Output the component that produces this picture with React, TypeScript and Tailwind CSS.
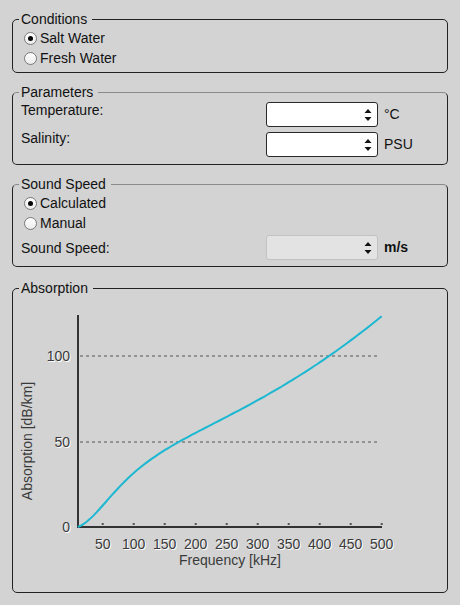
import React from "react";

// absorption model (dB/km) vs frequency (kHz): relaxation + viscous term
const absorption = (f: number) => {
  const f2 = 90;
  return (0.59 * f2 * f * f) / (f2 * f2 + f * f) + 2.9e-4 * f * f;
};

const fx = (f: number) => 71.7 + 0.62 * f;
const vy = (v: number) => 527 - 1.71 * v;

const curvePath = () => {
  const pts: string[] = [];
  for (let f = 10; f <= 500; f += 5) {
    pts.push(`${fx(f).toFixed(1)},${vy(absorption(f) - absorption(10)).toFixed(1)}`);
  }
  return "M" + pts.join(" L");
};

const Radio = ({ label, checked }: { label: string; checked?: boolean }) => (
  <label className="flex items-center h-[20px]">
    <span className="ml-[5px] mr-[3px] w-[13px] h-[13px] rounded-full border border-[#7a7a7a] bg-gradient-to-b from-white to-[#ececec] flex items-center justify-center">
      {checked && <span className="w-[5px] h-[5px] rounded-full bg-black" />}
    </span>
    <span>{label}</span>
  </label>
);

const Spinner = ({ disabled }: { disabled?: boolean }) => (
  <div
    className={
      "relative w-[112px] h-[25px] rounded-[3px] border " +
      (disabled ? "bg-[#e3e3e3] border-[#c2c2c2]" : "bg-white border-[#2a2a2a]")
    }
  >
    <svg
      className="absolute right-[5px] top-[5px]"
      width="8"
      height="14"
      viewBox="0 0 8 14"
    >
      <path d="M0.5 5 L4 1 L7.5 5 Z" fill="#111" />
      <path d="M0.5 9 L4 13 L7.5 9 Z" fill="#111" />
    </svg>
  </div>
);

const legendCls = "ml-0 pl-[2px] pr-[5px] leading-[18px]";

const Label = ({ x, y, children }: { x: number; y: number; children: string }) => (
  <>
    <text x={x + 1} y={y + 1} fill="#ffffff">
      {children}
    </text>
    <text x={x} y={y} fill="#3a3a3a">
      {children}
    </text>
  </>
);

export default function App() {
  const ticks = [50, 100, 150, 200, 250, 300, 350, 400, 450, 500];

  return (
    <div className="w-[460px] h-[605px] bg-[#d3d3d3] pt-[10px] text-[14px] text-[#111] font-['Liberation_Sans',Arial,sans-serif] overflow-hidden">
      {/* Conditions */}
      <fieldset className="mx-3 border border-[#222] rounded-[5px] pl-[6px] pr-[6px] pb-[4px]">
        <legend className={legendCls}>Conditions</legend>
        <Radio label="Salt Water" checked />
        <Radio label="Fresh Water" />
      </fieldset>

      {/* Parameters */}
      <fieldset className="mx-3 mt-[10px] border border-[#222] border-t-[#8a8a8a] rounded-[5px] pl-[6px] pr-[6px] pb-[7px]">
        <legend className={legendCls}>Parameters</legend>
        <div className="flex items-start mt-[1px]">
          <div className="w-[247px] pl-[2px] leading-[16px]">Temperature:</div>
          <div className="flex items-center">
            <Spinner />
            <span className="ml-[6px]">°C</span>
          </div>
        </div>
        <div className="flex items-start mt-[5px]">
          <div className="w-[247px] pl-[2px] leading-[16px] -mt-[2px]">Salinity:</div>
          <div className="flex items-center">
            <Spinner />
            <span className="ml-[6px]">PSU</span>
          </div>
        </div>
      </fieldset>

      {/* Sound Speed */}
      <fieldset className="mx-3 mt-[10px] border border-[#222] border-t-[#8a8a8a] rounded-[5px] pl-[6px] pr-[6px] pb-[6px]">
        <legend className={legendCls}>Sound Speed</legend>
        <Radio label="Calculated" checked />
        <Radio label="Manual" />
        <div className="flex items-center mt-[2px]">
          <div className="w-[247px] pl-[2px] leading-[16px]">Sound Speed:</div>
          <Spinner disabled />
          <span className="ml-[6px] font-bold">m/s</span>
        </div>
      </fieldset>

      {/* Absorption */}
      <fieldset className="mx-3 mt-[12px] border border-[#222] rounded-[5px] pl-[6px] pr-[6px]">
        <legend className={legendCls}>Absorption</legend>
        <svg
          width="422"
          height="295"
          viewBox="19 297 422 295"
          className="block font-['Liberation_Sans',Arial,sans-serif]"
          fontSize="14"
        >
          {/* grid */}
          <line x1="80" y1="356" x2="380" y2="356" stroke="#555" strokeDasharray="3 3" />
          <line x1="80" y1="442" x2="380" y2="442" stroke="#555" strokeDasharray="3 3" />

          {/* ticks */}
          {ticks.map((t) => (
            <rect key={t} x={fx(t) - 1} y="523" width="2" height="2" fill="#555" />
          ))}

          {/* axes */}
          <line x1="78" y1="315" x2="78" y2="528" stroke="#333" strokeWidth="2" />
          <line x1="77" y1="527" x2="382" y2="527" stroke="#333" strokeWidth="2" />

          {/* y labels */}
          <g textAnchor="end" dominantBaseline="central">
            <Label x={70} y={356}>100</Label>
            <Label x={70} y={442}>50</Label>
            <Label x={70} y={527}>0</Label>
          </g>

          {/* x labels */}
          <g textAnchor="middle" dominantBaseline="central">
            {ticks.map((t) => (
              <Label key={t} x={fx(t)} y={544}>
                {String(t)}
              </Label>
            ))}
          </g>

          <text x="230" y="560" textAnchor="middle" dominantBaseline="central" fill="#3a3a3a">
            Frequency [kHz]
          </text>
          <text
            x="27"
            y="441"
            textAnchor="middle"
            dominantBaseline="central"
            fill="#3a3a3a"
            transform="rotate(-90 27 441)"
          >
            Absorption [dB/km]
          </text>

          {/* curve */}
          <path d={curvePath()} fill="none" stroke="#1cb8d2" strokeWidth="2" strokeLinejoin="round" />
        </svg>
      </fieldset>
    </div>
  );
}
